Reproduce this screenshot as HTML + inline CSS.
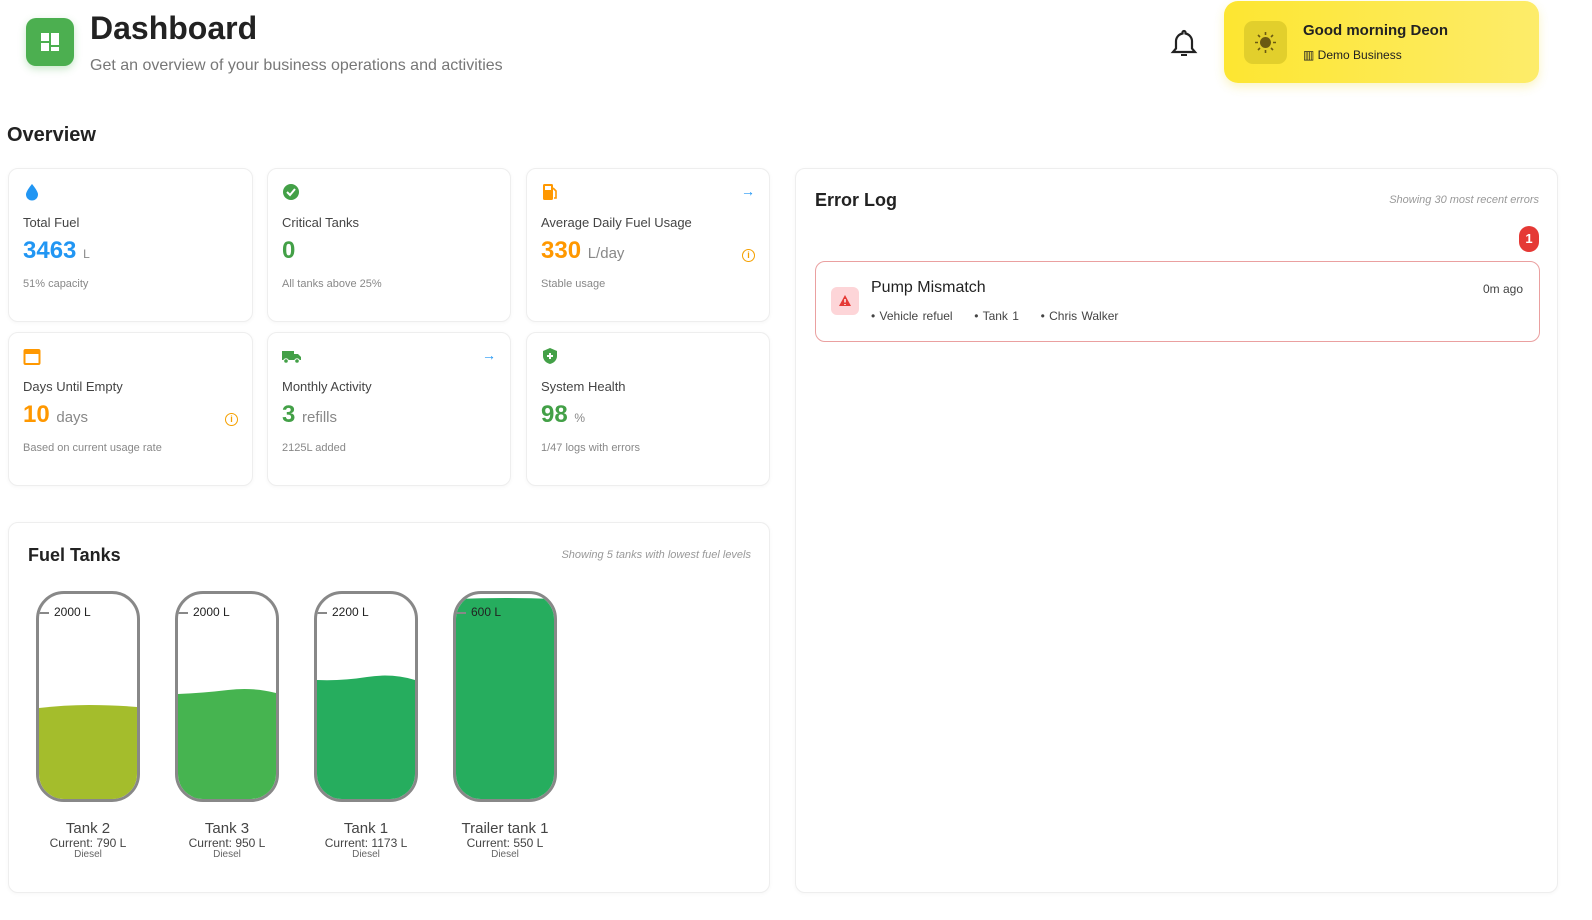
<!DOCTYPE html>
<html><head><meta charset="utf-8"><style>
*{box-sizing:border-box;margin:0;padding:0}
body{width:1592px;height:920px;background:#fff;font-family:"Liberation Sans",sans-serif;color:#222;position:relative;overflow:hidden}
.a{position:absolute}
.card{position:absolute;background:#fff;border:1px solid #eee;border-radius:10px;box-shadow:0 1px 4px rgba(0,0,0,.04)}
.lbl{position:absolute;left:14px;top:46px;font-size:13px;color:#444}
.val{position:absolute;left:14px;top:68px;font-size:24px;font-weight:bold}
.unit{font-size:15px;color:#888;font-weight:normal}
.sub{position:absolute;left:14px;top:109px;font-size:11px;color:#888}
.ic{position:absolute;left:14px;top:14px}
.arr{position:absolute;right:14px;top:14px;color:#2196f3;font-size:14px}
.info{position:absolute;right:14px;top:80px;width:13px;height:13px;border:1.5px solid #f5a000;border-radius:50%;color:#f5a000;font-size:9px;text-align:center;line-height:10px;font-weight:bold}
.tank{position:absolute;top:591px;width:104px;height:211px;border:3px solid #888;border-radius:28px;overflow:hidden;background:#fff}
.tank .cap{position:absolute;left:0;top:11px;font-size:12px;color:#222;z-index:2}
.tank .cap:before{content:"";display:inline-block;width:10px;height:2px;background:#888;vertical-align:middle;margin-right:5px}
.tl{position:absolute;top:820px;width:130px;text-align:center;color:#444}
</style></head><body>
<div class="a" style="left:26px;top:18px;width:48px;height:48px;background:#4caf50;border-radius:10px;box-shadow:0 3px 8px rgba(76,175,80,.3)">
<svg width="48" height="48"><rect x="15" y="15" width="8" height="8" fill="#fff"/><rect x="25" y="15" width="8" height="12" fill="#fff"/><rect x="15" y="25" width="8" height="8" fill="#fff"/><rect x="25" y="29" width="8" height="4" fill="#fff"/></svg></div>
<div class="a" style="left:90px;top:10px;font-size:32px;font-weight:bold;color:#222">Dashboard</div>
<div class="a" style="left:90px;top:57px;font-size:16px;color:#777">Get an overview of your business operations and activities</div>
<svg class="a" style="left:1170px;top:28px" width="28" height="32" viewBox="0 0 28 32"><path d="M14 3a1.5 1.5 0 0 1 1.5 1.5v1A8 8 0 0 1 22 13.5v7l3 3.5H3l3-3.5v-7a8 8 0 0 1 6.5-8v-1A1.5 1.5 0 0 1 14 3z" fill="none" stroke="#222" stroke-width="2.2"/><path d="M11 27h6" stroke="#222" stroke-width="2"/></svg>
<div class="a" style="left:1224px;top:1px;width:315px;height:82px;border-radius:14px;background:linear-gradient(90deg,#fde631,#fdec6a);box-shadow:0 4px 10px rgba(240,220,60,.3)">
<div class="a" style="left:20px;top:20px;width:43px;height:43px;border-radius:9px;background:#e2cf2c"><svg width="43" height="43"><circle cx="21.5" cy="21.5" r="5.5" fill="#6b5a12"/><g stroke="#6b5a12" stroke-width="1.6"><path d="M21.5 11v3M21.5 29v3M11 21.5h3M29 21.5h3M14 14l2 2M27 27l2 2M14 29l2-2M27 16l2-2"/></g></svg></div>
<div class="a" style="left:79px;top:21px;font-size:15px;font-weight:bold;color:#222">Good morning Deon</div>
<div class="a" style="left:79px;top:47px;font-size:12px;color:#222">▥ Demo Business</div></div>
<div class="a" style="left:7px;top:124px;font-size:20px;font-weight:bold;color:#222">Overview</div>

<div class="card" style="left:8px;top:168px;width:245px;height:154px"><svg class="ic" width="18" height="18"><path d="M9 1C9 1 3 8 3 11.5a6 6 0 0 0 12 0C15 8 9 1 9 1z" fill="#2196f3"/></svg><div class="lbl">Total Fuel</div><div class="val" style="color:#2196f3">3463 <span class="unit" style="font-size:12px">L</span></div><div class="sub">51% capacity</div></div>
<div class="card" style="left:267px;top:168px;width:244px;height:154px"><svg class="ic" width="18" height="18"><circle cx="9" cy="9" r="8" fill="#43a047"/><path d="M5 9l3 3 5-6" stroke="#fff" stroke-width="2" fill="none"/></svg><div class="lbl">Critical Tanks</div><div class="val" style="color:#43a047">0</div><div class="sub">All tanks above 25%</div></div>
<div class="card" style="left:526px;top:168px;width:244px;height:154px"><svg class="ic" width="18" height="18"><rect x="2" y="1" width="10" height="16" rx="1.5" fill="#ff9800"/><rect x="4" y="3" width="6" height="4" fill="#fff"/><path d="M12 5l3 3v7h-2" stroke="#ff9800" stroke-width="1.6" fill="none"/></svg><div class="arr">→</div><div class="lbl">Average Daily Fuel Usage</div><div class="val" style="color:#ff9800">330 <span class="unit">L/day</span></div><div class="info">i</div><div class="sub">Stable usage</div></div>
<div class="card" style="left:8px;top:332px;width:245px;height:154px"><svg class="ic" width="18" height="18"><rect x="1.5" y="3" width="15" height="14" rx="1" fill="none" stroke="#ff9800" stroke-width="2"/><rect x="1.5" y="3" width="15" height="4" fill="#ff9800"/></svg><div class="lbl">Days Until Empty</div><div class="val" style="color:#ff9800">10 <span class="unit">days</span></div><div class="info">i</div><div class="sub">Based on current usage rate</div></div>
<div class="card" style="left:267px;top:332px;width:244px;height:154px"><svg class="ic" width="20" height="18"><rect x="0" y="4" width="12" height="9" fill="#43a047"/><path d="M12 7h4l3 3v3h-7z" fill="#43a047"/><circle cx="4" cy="14" r="2.3" fill="#43a047" stroke="#fff"/><circle cx="15" cy="14" r="2.3" fill="#43a047" stroke="#fff"/></svg><div class="arr">→</div><div class="lbl">Monthly Activity</div><div class="val" style="color:#43a047">3 <span class="unit">refills</span></div><div class="sub">2125L added</div></div>
<div class="card" style="left:526px;top:332px;width:244px;height:154px"><svg class="ic" width="18" height="18"><path d="M9 1l7 3v5c0 4-3 7-7 8-4-1-7-4-7-8V4z" fill="#43a047"/><path d="M9 6v6M6 9h6" stroke="#fff" stroke-width="2"/></svg><div class="lbl">System Health</div><div class="val" style="color:#43a047">98 <span class="unit" style="font-size:12px">%</span></div><div class="sub">1/47 logs with errors</div></div>

<div class="card" style="left:8px;top:522px;width:762px;height:371px">
<div class="a" style="left:19px;top:22px;font-size:18px;font-weight:bold">Fuel Tanks</div>
<div class="a" style="right:18px;top:26px;font-size:11px;color:#999;font-style:italic">Showing 5 tanks with lowest fuel levels</div></div>

<div class="tank" style="left:36px"><svg class="a" style="left:0;top:0" width="98" height="205"><path d="M0 114 Q25 111 50 111 T98 113 V205 H0Z" fill="#a4bd2c"/></svg><div class="cap">2000 L</div></div>
<div class="tank" style="left:175px"><svg class="a" style="left:0;top:0" width="98" height="205"><path d="M0 100 Q25 99 50 96 T98 99 V205 H0Z" fill="#46b450"/></svg><div class="cap">2000 L</div></div>
<div class="tank" style="left:314px"><svg class="a" style="left:0;top:0" width="98" height="205"><path d="M0 86 Q25 87 50 83 T98 86 V205 H0Z" fill="#26ad5e"/></svg><div class="cap">2200 L</div></div>
<div class="tank" style="left:453px"><svg class="a" style="left:0;top:0" width="98" height="205"><path d="M0 5 Q50 3 98 5 V205 H0Z" fill="#26ad5e"/></svg><div class="cap">600 L</div></div>
<div class="tl" style="left:23px"><div style="font-size:15px">Tank 2</div><div style="font-size:12px;line-height:12px">Current: 790 L</div><div style="font-size:10px;color:#666">Diesel</div></div>
<div class="tl" style="left:162px"><div style="font-size:15px">Tank 3</div><div style="font-size:12px;line-height:12px">Current: 950 L</div><div style="font-size:10px;color:#666">Diesel</div></div>
<div class="tl" style="left:301px"><div style="font-size:15px">Tank 1</div><div style="font-size:12px;line-height:12px">Current: 1173 L</div><div style="font-size:10px;color:#666">Diesel</div></div>
<div class="tl" style="left:440px"><div style="font-size:15px">Trailer tank 1</div><div style="font-size:12px;line-height:12px">Current: 550 L</div><div style="font-size:10px;color:#666">Diesel</div></div>

<div class="card" style="left:795px;top:168px;width:763px;height:725px">
<div class="a" style="left:19px;top:21px;font-size:18px;font-weight:bold">Error Log</div>
<div class="a" style="right:18px;top:25px;font-size:11px;color:#999;font-style:italic">Showing 30 most recent errors</div>
<div class="a" style="left:723px;top:57px;width:20px;height:26px;border-radius:10px;background:#e53935;color:#fff;font-size:13px;font-weight:bold;text-align:center;line-height:26px">1</div>
<div class="a" style="left:19px;top:92px;width:725px;height:81px;border:1.5px solid #eaa0a0;border-radius:10px">
<div class="a" style="left:15px;top:25px;width:28px;height:28px;border-radius:6px;background:#fdd5d8"><svg width="28" height="28"><path d="M14 8l6 11H8z" fill="#e53935"/><path d="M14 12v3.5M14 17v1" stroke="#fff" stroke-width="1.4"/></svg></div>
<div class="a" style="left:55px;top:17px;font-size:16px;color:#222">Pump Mismatch</div>
<div class="a" style="right:16px;top:20px;font-size:12px;color:#444">0m ago</div>
<div class="a" style="left:55px;top:47px;font-size:12px;color:#444;word-spacing:1px">• Vehicle refuel &nbsp;&nbsp;&nbsp; • Tank 1 &nbsp;&nbsp;&nbsp; • Chris Walker</div>
</div></div>
</body></html>
